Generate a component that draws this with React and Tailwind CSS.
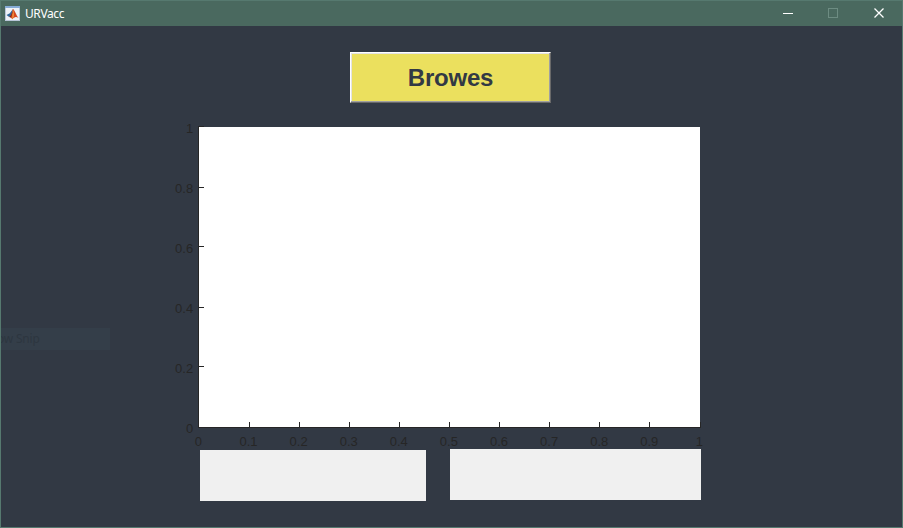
const xTicks = ["0", "0.1", "0.2", "0.3", "0.4", "0.5", "0.6", "0.7", "0.8", "0.9", "1"];
const yTicks = ["0", "0.2", "0.4", "0.6", "0.8", "1"];
const yTickRows = [427, 366, 307, 246, 187, 126];

function MatlabIcon() {
  return (
    <svg width="16" height="16" viewBox="0 0 16 16" className="shrink-0">
      <rect x="1.5" y="0.5" width="14" height="14" fill="#eef2f8" stroke="#b9c6d8" />
      <rect x="1" y="0" width="15" height="2" fill="#86abd6" />
      <path d="M2.5 9 L5.8 7.3 L9 3 L7.6 9.5 L5.2 11 Z" fill="#32699c" />
      <path d="M9 3 C10.8 4 12 9 14.5 12 C12 10 10.2 11 8.3 13.2 C7.3 11.5 6 11 5.2 11 C7.2 10 8.2 6 9 3 Z" fill="#d5481f" />
      <path d="M9 3 C9.8 6 10.3 8 9.8 11 L8.3 13.2 C8 10 8.4 6 9 3 Z" fill="#ef8a3a" />
      <path d="M9 3 C8 7 7.4 9.5 5.2 11 L6.8 11.6 C8 9.5 8.7 6 9 3 Z" fill="#7a241b" />
    </svg>
  );
}

function TitleBar() {
  return (
    <header className="flex h-[25px] shrink-0 items-center bg-[#4a695f] pl-[3px] text-white">
      <MatlabIcon />
      <span className="ml-[5px] font-['Noto_Sans',sans-serif] text-[12px] leading-4 tracking-[-0.4px]">URVacc</span>
      <div className="ml-auto flex h-full items-center">
        <svg width="46" height="25" viewBox="0 0 46 25" shapeRendering="crispEdges">
          <rect x="18" y="12" width="10" height="1" fill="#fff" />
        </svg>
        <svg width="46" height="25" viewBox="0 0 46 25" shapeRendering="crispEdges">
          <rect x="17.5" y="7.5" width="9" height="9" fill="none" stroke="#6d8c82" />
        </svg>
        <svg width="45" height="25" viewBox="0 0 45 25">
          <path d="M17.5 7.5 L26.5 16.5 M26.5 7.5 L17.5 16.5" stroke="#fff" strokeWidth="1.3" fill="none" />
        </svg>
      </div>
    </header>
  );
}

function Axes() {
  return (
    <svg
      width="540"
      height="329"
      viewBox="170 120 540 329"
      className="ml-[169px] mt-[17px] block shrink-0 font-['Liberation_Sans',Arial,sans-serif] text-[13px]"
    >
      <g shapeRendering="crispEdges">
        <rect x="199" y="127" width="501" height="300" fill="#fff" />
        <g fill="#262626">
          <rect x="198" y="127" width="1" height="301" />
          <rect x="198" y="427" width="502" height="1" />
          {xTicks.map((t, i) => (
            <rect key={t} x={i === 0 ? 198 : i === 10 ? 700 : 199 + i * 50} y="422" width="1" height="6" />
          ))}
          {yTicks.map((t, i) => (
            <rect key={t} x="198" y={yTickRows[i]} width="6" height="1" />
          ))}
        </g>
      </g>
      <g fill="#262626">
        {xTicks.map((t, i) => (
          <text key={t} x={198.4 + i * 50.1} y="446" textAnchor="middle">{t}</text>
        ))}
        {yTicks.map((t, i) => (
          <text key={t} x="193.2" y={433 - i * 60} textAnchor="end">{t}</text>
        ))}
      </g>
    </svg>
  );
}

export default function App() {
  return (
    <div className="relative flex h-[528px] w-[903px] flex-col overflow-hidden border border-[#56796f] bg-[#323944]">
      <TitleBar />
      <main className="flex flex-col">
        <button className="ml-[349px] mt-[26px] h-[51px] w-[201px] shrink-0 border border-b-[#696969] border-l-white border-r-[#696969] border-t-white bg-[#ebe05e] font-['Liberation_Sans',Arial,sans-serif] text-2xl font-bold tracking-[-0.2px] text-[#323944] shadow-[inset_-1px_-1px_0_#a0a0a0,inset_1px_1px_0_#e3e3e3]">
          Browes
        </button>
        <Axes />
        <div className="ml-[199px] flex items-start gap-6">
          <div className="mt-px h-[51px] w-[226px] bg-[#f0f0f0]" />
          <div className="h-[51px] w-[251px] bg-[#f0f0f0]" />
        </div>
      </main>
      <div className="absolute left-0 top-[327px] flex h-[22px] w-[109px] items-center overflow-hidden bg-[#343e49] font-['Noto_Sans',sans-serif] text-[12px] text-[#2d3640]">
        <span className="-ml-[4px] tracking-[-0.2px]">ow Snip</span>
      </div>
    </div>
  );
}
